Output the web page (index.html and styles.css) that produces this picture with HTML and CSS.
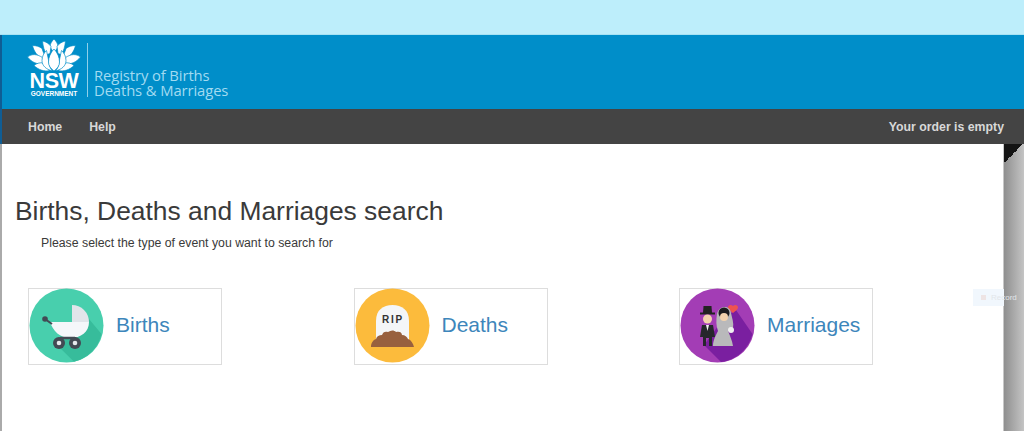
FILE: index.html
```html
<!DOCTYPE html>
<html lang="en">
<head>
<meta charset="utf-8">
<title>Births, Deaths and Marriages search</title>
<link rel="stylesheet" href="styles.css">
</head>
<body>
<div class="topbar"></div>
<header class="brand">
  <div class="logo">
    <svg class="waratah" viewBox="0 0 54 33" aria-hidden="true">
      <g fill="#fff" stroke="#008ec9" stroke-width="0.7">
        <path d="M27 0c2.500 2.500 4 5 4 8l-4 6-4-6c0-3 1.500-5.500 4-8z"/>
        <path d="M15.500 2c3.500.8 6.500 2.500 8.500 5.500l-1 7-3 1c-2.700-3-4-8-4.500-13.500z"/>
        <path d="M38.500 2c-3.500.8-6.500 2.500-8.500 5.500l1 7 3 1c2.700-3 4-8 4.500-13.500z"/>
        <path d="M5.500 6.500c3.500 0 7 1 9.500 3 .8 3 2 5.500 3.500 8l-2 2C11 18 7 13 5.500 6.500z"/>
        <path d="M48.500 6.500c-3.500 0-7 1-9.500 3-.8 3-2 5.500-3.500 8l2 2C43 18 47 13 48.500 6.500z"/>
        <path d="M.5 18c4.500-3.500 9.500-3 15 .5l1.500 6c-7 1.500-12.500-1.500-16.500-6.500z"/>
        <path d="M53.500 18c-4.500-3.500-9.500-3-15 .5l-1.500 6c7 1.500 12.500-1.500 16.500-6.500z"/>
        <path d="M7 26.500c2.500-2.200 6-3.200 9.500-2.500 1.500 3 3.500 5 6.500 7.500-6 1.500-12-1-16-5z"/>
        <path d="M47 26.500c-2.500-2.200-6-3.200-9.500-2.500-1.500 3-3.500 5-6.500 7.500 6 1.500 12-1 16-5z"/>
        <path d="M19.500 11.500c1 4.500 2 9 2.500 12.500.4 3 1.400 5.500 3.500 8-6-1.500-10.500-5-10.500-10.500 0-4 1.800-7.500 4.500-10z"/>
        <path d="M34.500 11.500c-1 4.500-2 9-2.500 12.500-.4 3-1.400 5.500-3.500 8 6-1.500 10.500-5 10.500-10.500 0-4-1.800-7.500-4.500-10z"/>
        <path d="M27 10c3.500 3.500 5.500 8.500 5.500 13 0 3.500-2 6.500-5.500 9-3.500-2.500-5.500-5.500-5.500-9 0-4.500 2-9.500 5.500-13z"/>
      </g>
    </svg>
    <div class="nsw">NSW</div>
    <div class="gov">GOVERNMENT</div>
  </div>
  <div class="brand-rule"></div>
  <div class="brand-name">Registry of Births<br>Deaths &amp; Marriages</div>
</header>
<nav class="nav">
  <a class="nav-link" href="#">Home</a>
  <a class="nav-link" href="#">Help</a>
  <span class="order">Your order is empty</span>
</nav>
<div class="fold"></div>
<main class="content">
  <h1 class="title">Births, Deaths and Marriages search</h1>
  <p class="lead">Please select the type of event you want to search for</p>
  <div class="cards">
    <a class="card" href="#">
      <svg class="badge" viewBox="0 0 75 75" aria-hidden="true">
        <circle cx="37.500" cy="37.500" r="37" fill="#48cfad"/>
        <path d="M50 19 72.500 46A37 37 0 0 1 45 73.800L28 57 40 40z" fill="#37bc9b"/>
        <path d="M43 17a17 17 0 0 1 17 17l-17 0z" fill="#e1e5ea"/>
        <path d="M21 34h39c0 10-8 16-19 16-10 0-17-7-20-16z" fill="#f5f7fa"/>
        <path d="M16 31 23 36" stroke="#434a54" stroke-width="2"/>
        <circle cx="16" cy="31" r="2.800" fill="#434a54"/>
        <path d="M32 49v5M46 49v5M31 50h15" stroke="#434a54" stroke-width="2.500" fill="none"/>
        <circle cx="30" cy="55" r="6" fill="#434a54"/>
        <circle cx="46" cy="55" r="6" fill="#434a54"/>
        <circle cx="30" cy="55" r="2.300" fill="#e6e9ed"/>
        <circle cx="46" cy="55" r="2.300" fill="#e6e9ed"/>
      </svg>
      <span class="card-label">Births</span>
    </a>
    <a class="card" href="#">
      <svg class="badge" viewBox="0 0 75 75" aria-hidden="true">
        <circle cx="37.500" cy="37.500" r="37" fill="#fcbb3c"/>
        <path d="M21 52V33c0-11 7-16 16.500-16S54 22 54 33v19z" fill="#f4f6f8"/>
        <text class="rip" x="38" y="35">RIP</text>
        <path d="M16 59c0-4 2-7 5-8 1-3 3-4 6-4 1-3 3-4 6-3 3-2 6-2 8 0 3-1 6 0 6 3 3 0 5 2 6 4 3 1 5 4 6 8z" fill="#98603e"/>
      </svg>
      <span class="card-label">Deaths</span>
    </a>
    <a class="card" href="#">
      <svg class="badge" viewBox="0 0 75 75" aria-hidden="true">
        <circle cx="37.500" cy="37.500" r="37" fill="#a33db5"/>
        <path d="M56 22 72.500 46A37 37 0 0 1 41 74L24 57 44 30z" fill="#7a1fa0"/>
        <path d="M53 18c-2-2-5-1-5 1.500 0 2 2.500 3.500 5 5.500 2.500-2 5-3.500 5-5.500 0-2.500-3-3.500-5-1.500z" fill="#ef5350"/>
        <path d="M23 25l.5-7h8l.5 7z" fill="#222"/>
        <path d="M20 25.500h15" stroke="#222" stroke-width="2"/>
        <circle cx="27.500" cy="31" r="4.500" fill="#f3d3ae"/>
        <path d="M22 37h11l2 12h-3v9h-3V50h-3v8h-3v-9h-3z" fill="#26262c"/>
        <path d="M26 37h3l-1.500 6z" fill="#f2f2f2"/>
        <path d="M37 26c2-9 13-9 14-1 1 5 3 10 2 15l-5 3c2 5 4 9 5 15H33c0-6 3-11 5-15-2-5-2-11-1-17z" fill="#b9b9bb"/>
        <circle cx="44" cy="25" r="5.500" fill="#1d1d20"/>
        <circle cx="44" cy="29" r="4" fill="#f3d3ae"/>
        <circle cx="51" cy="42" r="3" fill="#f0f0f0"/>
      </svg>
      <span class="card-label">Marriages</span>
    </a>
  </div>
</main>
<div class="ghost"><span class="ghost-dot"></span><span class="ghost-text">Record</span></div>
</body>
</html>
```
FILE: styles.css
```css
* {
  box-sizing: border-box;
}

html,
body {
  height: 100%;
}

body {
  position: relative;
  margin: 0;
  overflow: hidden;
  display: flex;
  flex-direction: column;
  font-family: "Liberation Sans", Arial, sans-serif;
  background: linear-gradient(90deg, #aaa 0 2px, transparent 2px),
    linear-gradient(90deg, #fff 0 1003px, #8f8f8f 1004px, #c4c4c4 1024px);
}

.topbar {
  height: 35px;
  flex: none;
  background: #bdeefb;
  border-bottom: 1px solid #a7e2f3;
}

.brand {
  height: 74px;
  flex: none;
  display: flex;
  align-items: flex-start;
  padding: 4px 0 0 25px;
  background: #008ec9;
  border-left: 2px solid #0f5d94;
}

.logo {
  width: 54px;
  display: flex;
  flex-direction: column;
  align-items: center;
  color: #fff;
}

.waratah {
  display: block;
  width: 54px;
  height: 33px;
}

.nsw {
  font-size: 21.500px;
  line-height: 19px;
  font-weight: 700;
  letter-spacing: -0.4px;
}

.gov {
  font-size: 6.500px;
  line-height: 6px;
  font-weight: 700;
  white-space: nowrap;
}

.brand-rule {
  width: 1px;
  height: 54px;
  margin: 4px 0 0 6px;
  background: #8fd0ea;
}

.brand-name {
  margin: 29px 0 0 6px;
  font-family: "Open Sans", "Liberation Sans", sans-serif;
  font-size: 14.800px;
  font-weight: 400;
  letter-spacing: -0.1px;
  line-height: 15px;
  color: #a2dbf1;
}

.nav {
  height: 35px;
  flex: none;
  display: flex;
  align-items: center;
  gap: 27px;
  padding: 0 20px 0 26px;
  background: #444;
  border-left: 2px solid #0f5d94;
  font-size: 12.300px;
  font-weight: 700;
  color: #d8d8d8;
}

.nav-link {
  color: inherit;
  text-decoration: none;
}

.order {
  margin-left: auto;
}

.fold {
  position: absolute;
  top: 144px;
  right: 1px;
  width: 19px;
  height: 19px;
  background: linear-gradient(to top left, transparent 50%, #141414 50%);
}

.content {
  flex: 1;
  padding: 52px 13px 0 15px;
}

.title {
  margin: 0;
  font-size: 26.400px;
  line-height: 30px;
  font-weight: 400;
  color: #3a3a3a;
}

.lead {
  margin: 9px 0 0 26px;
  font-size: 12.300px;
  line-height: 16px;
  color: #3a3a3a;
}

.cards {
  display: grid;
  grid-template-columns: repeat(3, 325.500px);
  margin: 37px 0 0 13px;
}

.card {
  width: 194px;
  height: 77px;
  display: flex;
  align-items: center;
  gap: 12px;
  border: 1px solid #ddd;
  text-decoration: none;
}

.badge {
  display: block;
  width: 75px;
  height: 75px;
  flex: none;
  margin-top: -2px;
}

.rip {
  font-size: 10px;
  font-weight: 700;
  letter-spacing: 1.800px;
  text-anchor: middle;
  fill: #333;
}

.card-label {
  margin-bottom: 4px;
  font-size: 21px;
  color: #3d86bb;
}

.ghost {
  position: absolute;
  top: 289px;
  left: 973px;
  width: 51px;
  height: 17px;
  display: flex;
  align-items: center;
  gap: 5px;
  padding-left: 8px;
  background: linear-gradient(90deg, #f1f7fd 0 31px, transparent 31px);
  font-size: 8px;
  overflow: hidden;
}

.ghost-dot {
  width: 5px;
  height: 5px;
  flex: none;
  background: #eee4e4;
}

.ghost-text {
  color: #e2e6ea;
}
```
